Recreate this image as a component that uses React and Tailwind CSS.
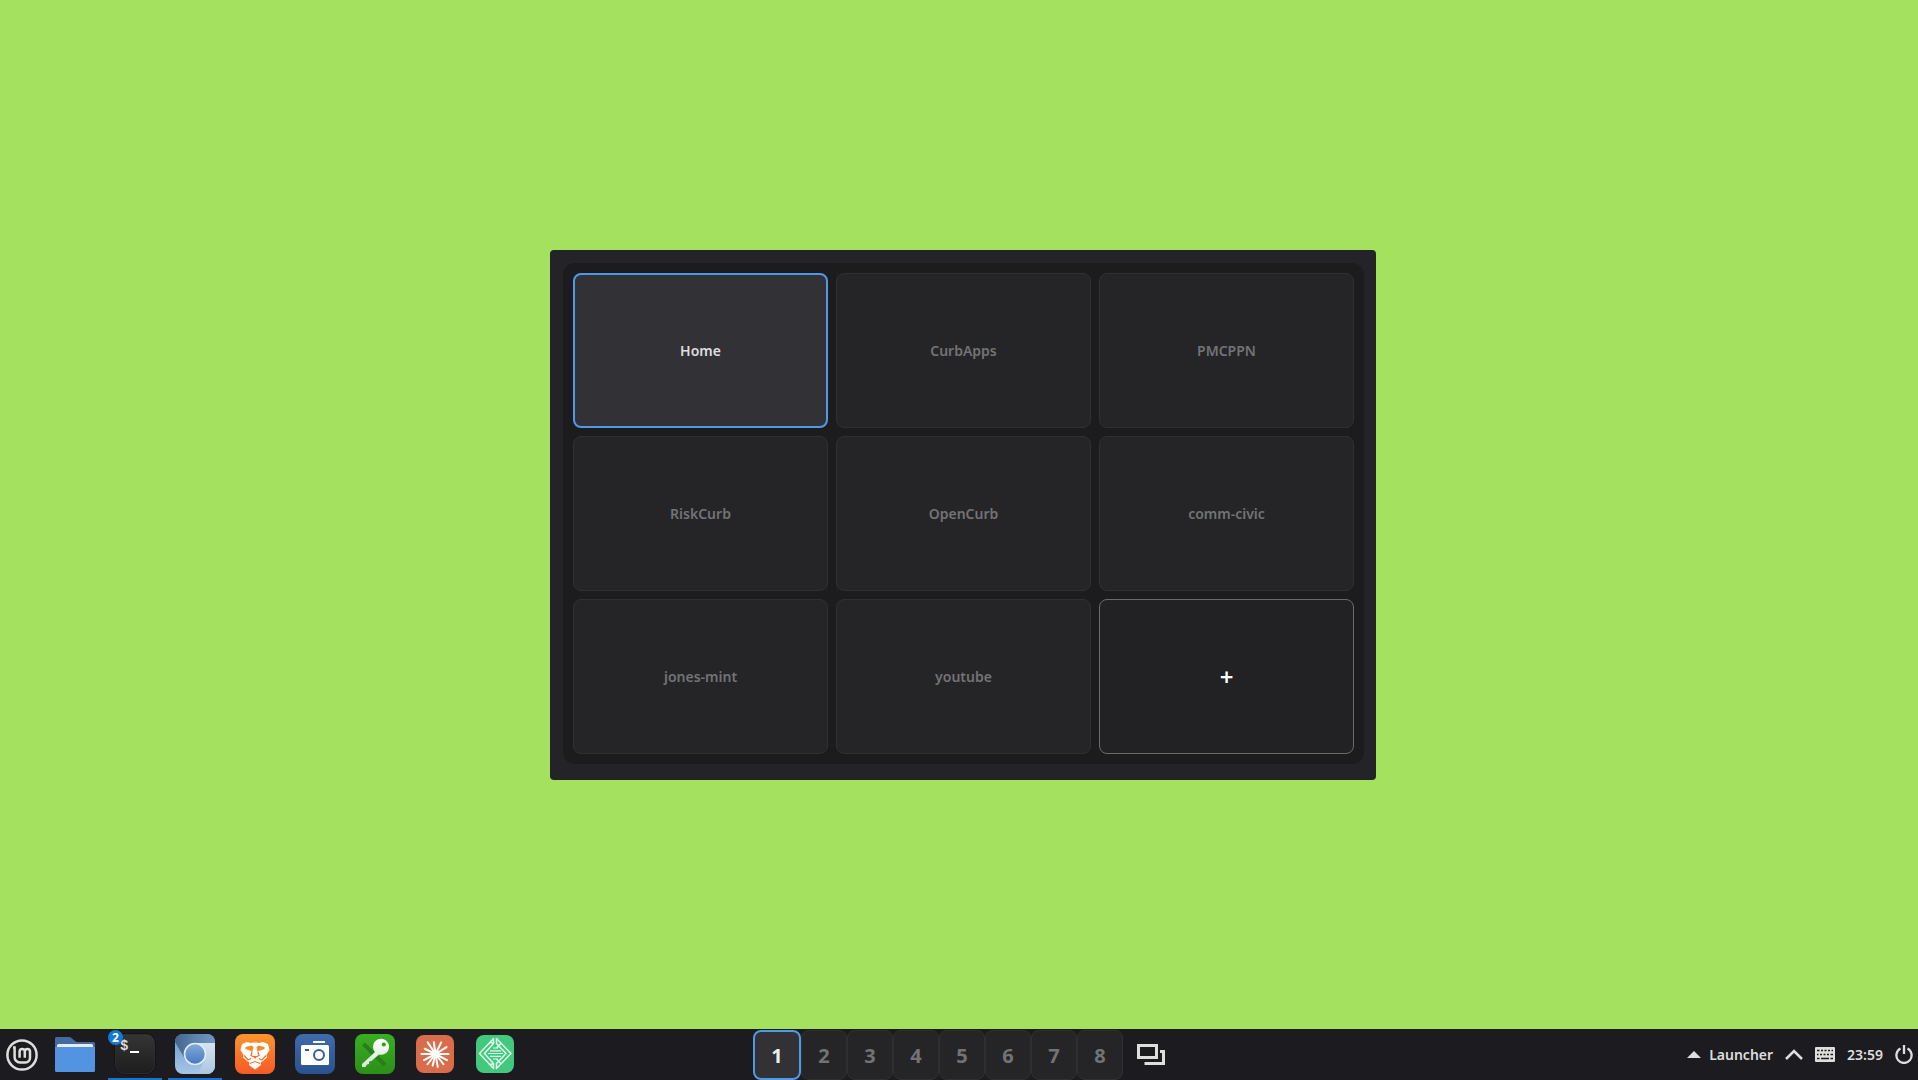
import React, { useState } from 'react';

const MintLogo = () => (
  <svg width="32" height="32" viewBox="0 0 32 32" fill="none" stroke="#dedede" strokeWidth="2.5">
    <circle cx="16" cy="16" r="14.6" />
    <path d="M7 8.6h1.6v9.6a5.2 5.2 0 0 0 5.2 5.2h5.6a4.6 4.6 0 0 0 4.6-4.6v-6.2a2.6 2.6 0 0 0-5.2 0v6.2M18.8 12.6a2.6 2.6 0 0 0-5.2 0v6.2" />
  </svg>
);

const FolderIcon = () => (
  <svg width="40" height="35" viewBox="0 0 40 35">
    <path d="M0 1.5Q0 0 1.5 0H14q1.5 0 2.500 1L20 4q1 1 2.500 1H38.5Q40 5 40 6.500V20H0Z" fill="#456b9e" />
    <rect x="2" y="7" width="36" height="12" rx="1.5" fill="#e4ecf5" />
    <path d="M0 10H40V33.5Q40 35 38.5 35H1.5Q0 35 0 33.5Z" fill="#5294e2" />
  </svg>
);

const TerminalIcon = () => (
  <svg width="42" height="42" viewBox="-1 -1 42 42">
    <defs>
      <linearGradient id="term" x1="0" y1="0" x2="0" y2="1">
        <stop offset="0" stopColor="#353535" />
        <stop offset="1" stopColor="#1d1d1d" />
      </linearGradient>
    </defs>
    <rect x="-.5" y="-.5" width="41" height="41" rx="9" fill="#0c0c0d" />
    <rect x=".5" y=".5" width="39" height="39" rx="8" fill="url(#term)" stroke="#3b3b3b" strokeWidth=".6" />
    <text x="5" y="16" fontFamily="Liberation Mono" fontWeight="700" fontSize="14" fill="#dcdcdc">$</text>
    <rect x="15" y="17" width="9" height="2" fill="#fff" />
  </svg>
);

const ChromiumIcon = () => (
  <svg width="40" height="40" viewBox="0 0 40 40">
    <defs>
      <clipPath id="crClip"><rect width="40" height="40" rx="8" /></clipPath>
      <linearGradient id="crLeft" x1="0" y1="0" x2="0" y2="1">
        <stop offset="0" stopColor="#6b9acb" />
        <stop offset="1" stopColor="#a5c6e5" />
      </linearGradient>
      <linearGradient id="crRight" x1="0" y1="0" x2="0" y2="1">
        <stop offset="0" stopColor="#d5e3ef" />
        <stop offset="1" stopColor="#aac7e1" />
      </linearGradient>
      <linearGradient id="crTop" x1="0" y1="0" x2="1" y2="0">
        <stop offset="0" stopColor="#41658e" />
        <stop offset=".5" stopColor="#5d82ad" />
        <stop offset="1" stopColor="#7196bf" />
      </linearGradient>
      <linearGradient id="crCore" x1="0" y1="0" x2="0" y2="1">
        <stop offset="0" stopColor="#85abdb" />
        <stop offset="1" stopColor="#4479bf" />
      </linearGradient>
    </defs>
    <g clipPath="url(#crClip)">
      <rect width="40" height="40" fill="url(#crLeft)" />
      <path d="M0 0H40V9H20L10 25L0 8Z" fill="url(#crTop)" />
      <path d="M20 9H40V40H23L30 24Z" fill="url(#crRight)" />
    </g>
    <circle cx="20" cy="20" r="10.5" fill="url(#crCore)" stroke="#e2ebf5" strokeWidth="1.6" />
  </svg>
);

const BraveIcon = () => (
  <svg width="40" height="40" viewBox="0 0 40 40">
    <defs>
      <linearGradient id="brave" x1="0" y1="0" x2="0" y2="1">
        <stop offset="0" stopColor="#f9952f" />
        <stop offset="1" stopColor="#f65a27" />
      </linearGradient>
    </defs>
    <rect width="40" height="40" rx="8" fill="url(#brave)" />
    <path d="M12 8L16 9L18 8.500H22L24 9L28 8L33 10L34.500 16L31.500 21L32 23.500L28 27L25.500 28.500L26 31L20 35.500L14 31L14.500 28.500L12 27L8 23.500L8.500 21L5.500 16L7 10Z" fill="#fff" />
    <path d="M10.500 13L16.500 11.500L18.500 13L17.500 18L16 17L10.500 15ZM29.500 13L23.500 11.500L21.500 13L22.500 18L24 17L29.500 15Z" fill="#f78a2d" />
    <path d="M9 21.500L13 26L16 24.500M31 21.500L27 26L24 24.500M17 18L16 21.500L18 22.500H22L24 21.500L23 18" fill="none" stroke="#f66c29" strokeWidth="1.2" />
    <path d="M17.500 22H22.500L20 25Z" fill="#f66c29" />
    <path d="M15 29.500L20 27.500L25 29.500" fill="none" stroke="#f66428" strokeWidth="1" />
  </svg>
);

const CameraIcon = () => (
  <svg width="40" height="40" viewBox="0 0 40 40">
    <defs>
      <linearGradient id="cam" x1="0" y1="0" x2="0" y2="1">
        <stop offset="0" stopColor="#3f6cab" />
        <stop offset="1" stopColor="#28518f" />
      </linearGradient>
    </defs>
    <rect width="40" height="40" rx="8" fill="url(#cam)" />
    <rect x="18" y="7" width="12" height="2" rx=".5" fill="#fff" />
    <rect x="6" y="11" width="28" height="20" rx="1.5" fill="#fff" />
    <rect x="10" y="15" width="4" height="2" fill="#335f9e" />
    <circle cx="24" cy="21" r="5" fill="none" stroke="#335f9e" strokeWidth="2" />
  </svg>
);

const KeyIcon = () => (
  <svg width="40" height="40" viewBox="0 0 40 40">
    <defs>
      <linearGradient id="keyBg" x1="0" y1="0" x2="0" y2="1">
        <stop offset="0" stopColor="#3aae22" />
        <stop offset="1" stopColor="#2b8f18" />
      </linearGradient>
      <linearGradient id="keyFg" x1="0" y1="0" x2="0" y2="1">
        <stop offset="0" stopColor="#fff" />
        <stop offset="1" stopColor="#d3e8cf" />
      </linearGradient>
    </defs>
    <rect width="40" height="40" rx="8" fill="url(#keyBg)" />
    <path d="M8.500 10L30 31" stroke="#24801a" strokeWidth="4" />
    <path d="M20 18L7 30V33H10.500L12 30.500L14 30V27.500L16.500 27L24 20.500A8 8 0 1 0 20 18Z" fill="url(#keyFg)" />
    <circle cx="28.8" cy="10.5" r="2" fill="#2f9a1b" />
  </svg>
);

// angle and length of every ray of the burst
const rays = [
  [0, 13], [28, 13], [52, 13], [80, 13], [104, 12], [128, 13], [152, 13],
  [180, 14], [206, 12], [236, 14], [262, 12], [296, 13], [328, 13],
];

const BurstIcon = () => (
  <svg width="38" height="38" viewBox="0 0 38 38">
    <rect width="38" height="38" rx="8" fill="#d96d4b" />
    <circle cx="19.5" cy="19" r="4" fill="#fff" />
    <g stroke="#fff" strokeWidth="2" strokeLinecap="round">
      {rays.map(([angle, length]) => (
        <line key={angle} x1="19.5" y1="19" x2={19.5 + length} y2="19" transform={`rotate(${angle} 19.5 19)`} />
      ))}
    </g>
  </svg>
);

const DiamondIcon = () => (
  <svg width="38" height="38" viewBox="0 0 38 38" fill="none" stroke="#e2faec">
    <rect width="38" height="38" rx="8" fill="#42c97e" stroke="none" />
    <g strokeWidth="1.5" strokeLinejoin="round">
      <path d="M17.500 3.500L3.500 18.500L17.500 33.500V28.500L8.500 18.500L17.500 8.500ZM14 7.200L17.500 8.500M14 29.800L17.500 28.500" />
      <path d="M20.500 3.500V8.500L30 18.500L20.500 28.500V33.500L35 18.500ZM25 8.200L20.500 13M25 28.800L20.500 24" />
    </g>
    <path d="M17 13H22M14 15.800H25M12 18.500H27M14 21.300H25M17 24H22" strokeWidth="1.2" />
  </svg>
);

const OverviewIcon = () => (
  <svg width="28" height="21" viewBox="0 0 28 21" fill="none" stroke="#dedede" strokeWidth="3">
    <path d="M1.500 1.500H19.500V13.500H1.500ZM23 7.500H26.500V19.500H7.500" />
  </svg>
);

const KeyboardIcon = () => (
  <svg width="20" height="15" viewBox="0 0 20 15">
    <rect width="20" height="15" rx="1" fill="#dedede" />
    <path d="M2 3.500H4.500M6 3.500H8M9.500 3.500H11.500M13 3.500H15M16.500 3.500H18M2 7.500H3.500M5 7.500H7M8.500 7.500H10.500M12 7.500H14M15.500 7.500H18M2 11.500H4.500M6 11.500H14M15.500 11.500H18" stroke="#1c1b20" strokeWidth="1.700" />
  </svg>
);

const PowerIcon = () => (
  <svg width="18" height="19" viewBox="0 0 18 19" fill="none" stroke="#dedede" strokeWidth="2.3">
    <path d="M5.500 3.600A7.600 7.600 0 1 0 12.500 3.600M9 0V9" />
  </svg>
);

const launchers = [
  { id: 'files', title: 'Files', icon: FolderIcon },
  { id: 'terminal', title: 'Terminal', icon: TerminalIcon, running: true, windows: 2 },
  { id: 'chromium', title: 'Chromium', icon: ChromiumIcon, running: true },
  { id: 'brave', title: 'Brave', icon: BraveIcon },
  { id: 'screenshot', title: 'Screenshot', icon: CameraIcon },
  { id: 'keepass', title: 'KeePassXC', icon: KeyIcon },
  { id: 'claude', title: 'Claude', icon: BurstIcon },
  { id: 'editor', title: 'Editor', icon: DiamondIcon },
];

const desktops = ['Home', 'CurbApps', 'PMCPPN', 'RiskCurb', 'OpenCurb', 'comm-civic', 'jones-mint', 'youtube'];

export default function App() {
  const [active, setActive] = useState(0);

  return (
    <div className="flex h-screen flex-col overflow-hidden bg-[#a3e15f] font-['Noto_Sans',sans-serif]">
      {/* Desktop with the workspace switcher */}
      <main className="flex flex-1 items-center justify-center pl-2">
        <div className="rounded bg-[#242327] pt-[13px] pr-3 pb-4 pl-[13px]">
          <div className="grid grid-cols-3 gap-2 rounded-xl bg-[#1c1c1e] p-[10px]">
            {desktops.map((name, index) => (
              <button
                key={name}
                onClick={() => setActive(index)}
                className={`h-[155px] w-[255px] rounded-lg pt-[2px] text-sm font-semibold ${
                  index === active
                    ? 'border-2 border-[#4f9ae6] bg-[#323136] text-[#dedede]'
                    : 'border border-[#303032] bg-[#252527] text-[#737375]'
                }`}
              >
                {name}
              </button>
            ))}
            <button
              aria-label="Add workspace"
              className="h-[155px] w-[255px] rounded-lg border border-[#6b6b6d] bg-[#222224] pt-[2px] text-2xl font-semibold text-white"
            >
              +
            </button>
          </div>
        </div>
      </main>

      {/* Panel */}
      <footer className="grid h-[51px] grid-cols-[1fr_auto_1fr] bg-[#1c1b20]">
        <div className="flex">
          <button aria-label="Menu" className="mr-1 flex w-11 items-center justify-center">
            <MintLogo />
          </button>
          <div className="flex gap-[6px]">
            {launchers.map((app) => (
              <button
                key={app.id}
                aria-label={app.title}
                className={`relative flex w-[54px] items-center justify-center border-b-2 pb-px pt-[2px] ${
                  app.running ? 'border-[#1a73cf]' : 'border-transparent'
                }`}
              >
                <app.icon />
                {app.windows && (
                  <span className="absolute top-[1px] left-0 flex size-[15px] items-center justify-center rounded-full bg-[#1378d6] text-xs font-bold text-white">
                    {app.windows}
                  </span>
                )}
              </button>
            ))}
          </div>
        </div>

        <div className="flex items-center">
          {desktops.map((name, index) => (
            <button
              key={name}
              aria-label={`${index + 1}: ${name}`}
              onClick={() => setActive(index)}
              className={`mt-px h-[50px] rounded-lg pt-[2px] text-xl font-bold ${
                index === active
                  ? 'w-12 border-2 border-[#4f9ae6] bg-[#323136] text-[#ececec]'
                  : 'w-[46px] border border-[#303032] bg-[#252527] text-[#737375]'
              }`}
            >
              {index + 1}
            </button>
          ))}
          <button aria-label="Show all workspaces" className="ml-[14px]">
            <OverviewIcon />
          </button>
        </div>

        <div className="flex items-center justify-end gap-3 pr-[5px] text-sm font-semibold text-[#dedede]">
          <button className="flex items-center gap-2">
            <svg width="14" height="7" viewBox="0 0 14 7">
              <path d="M7 0L14 7H0Z" fill="#dedede" />
            </svg>
            Launcher
          </button>
          <button aria-label="Show hidden items">
            <svg width="18" height="11" viewBox="0 0 18 11" fill="none" stroke="#dedede" strokeWidth="2.5">
              <path d="M1 10L9 2L17 10" />
            </svg>
          </button>
          <button aria-label="Keyboard layout">
            <KeyboardIcon />
          </button>
          <time>23:59</time>
          <button aria-label="Shut down">
            <PowerIcon />
          </button>
        </div>
      </footer>
    </div>
  );
}
